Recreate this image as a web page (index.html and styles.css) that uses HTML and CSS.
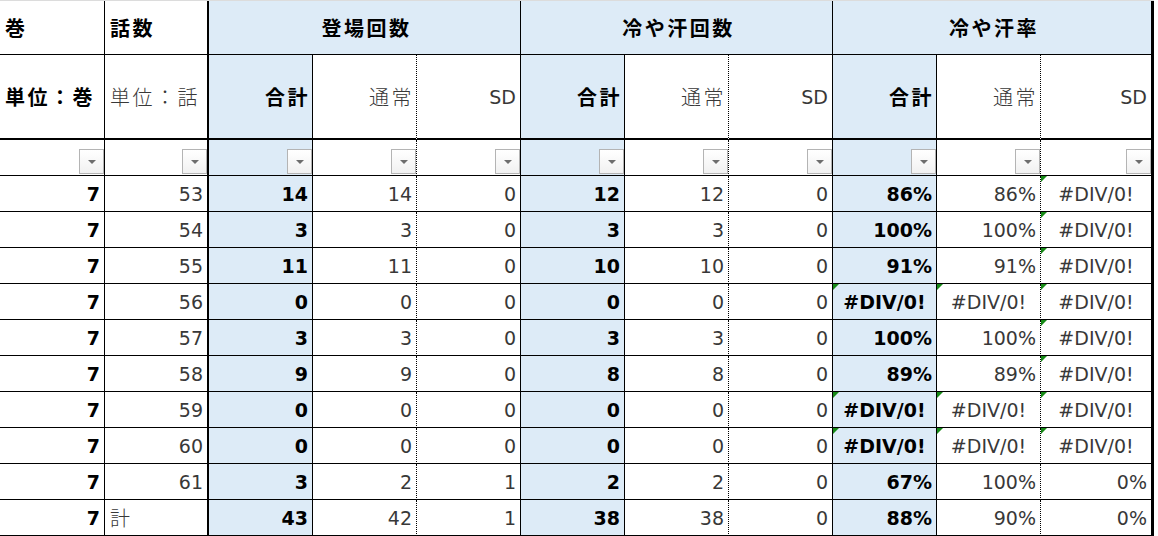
FILE: index.html
```html
<!DOCTYPE html>
<html lang="ja">
<head>
<meta charset="utf-8">
<title>冷や汗率</title>
<link rel="stylesheet" href="styles.css">
</head>
<body>
<div class="sheet">
  <div class="row top">
    <div class="j l bold">巻</div>
    <div class="j l bold">話数</div>
    <div class="j ctr bold blue span3">登場回数</div>
    <div class="j ctr bold blue span3">冷や汗回数</div>
    <div class="j ctr bold blue span3">冷や汗率</div>
  </div>
  <div class="row cols head">
    <div class="j l">単位：巻</div>
    <div class="j l">単位：話</div>
    <div class="j">合計</div><div class="j">通常</div><div>SD</div>
    <div class="j">合計</div><div class="j">通常</div><div>SD</div>
    <div class="j">合計</div><div class="j">通常</div><div>SD</div>
  </div>
  <div class="row cols filter">
    <div><span class="fb"></span></div>
    <div><span class="fb"></span></div>
    <div><span class="fb"></span></div>
    <div><span class="fb"></span></div>
    <div><span class="fb"></span></div>
    <div><span class="fb"></span></div>
    <div><span class="fb"></span></div>
    <div><span class="fb"></span></div>
    <div><span class="fb"></span></div>
    <div><span class="fb"></span></div>
    <div><span class="fb"></span></div>
  </div>
  <div class="row cols">
    <div>7</div><div>53</div>
    <div>14</div><div>14</div><div>0</div>
    <div>12</div><div>12</div><div>0</div>
    <div>86%</div><div>86%</div><div class="e">#DIV/0!</div>
  </div>
  <div class="row cols">
    <div>7</div><div>54</div>
    <div>3</div><div>3</div><div>0</div>
    <div>3</div><div>3</div><div>0</div>
    <div>100%</div><div>100%</div><div class="e">#DIV/0!</div>
  </div>
  <div class="row cols">
    <div>7</div><div>55</div>
    <div>11</div><div>11</div><div>0</div>
    <div>10</div><div>10</div><div>0</div>
    <div>91%</div><div>91%</div><div class="e">#DIV/0!</div>
  </div>
  <div class="row cols">
    <div>7</div><div>56</div>
    <div>0</div><div>0</div><div>0</div>
    <div>0</div><div>0</div><div>0</div>
    <div class="e">#DIV/0!</div><div class="e">#DIV/0!</div><div class="e">#DIV/0!</div>
  </div>
  <div class="row cols">
    <div>7</div><div>57</div>
    <div>3</div><div>3</div><div>0</div>
    <div>3</div><div>3</div><div>0</div>
    <div>100%</div><div>100%</div><div class="e">#DIV/0!</div>
  </div>
  <div class="row cols">
    <div>7</div><div>58</div>
    <div>9</div><div>9</div><div>0</div>
    <div>8</div><div>8</div><div>0</div>
    <div>89%</div><div>89%</div><div class="e">#DIV/0!</div>
  </div>
  <div class="row cols">
    <div>7</div><div>59</div>
    <div>0</div><div>0</div><div>0</div>
    <div>0</div><div>0</div><div>0</div>
    <div class="e">#DIV/0!</div><div class="e">#DIV/0!</div><div class="e">#DIV/0!</div>
  </div>
  <div class="row cols">
    <div>7</div><div>60</div>
    <div>0</div><div>0</div><div>0</div>
    <div>0</div><div>0</div><div>0</div>
    <div class="e">#DIV/0!</div><div class="e">#DIV/0!</div><div class="e">#DIV/0!</div>
  </div>
  <div class="row cols">
    <div>7</div><div>61</div>
    <div>3</div><div>2</div><div>1</div>
    <div>2</div><div>2</div><div>0</div>
    <div>67%</div><div>100%</div><div>0%</div>
  </div>
  <div class="row cols">
    <div>7</div><div class="j l">計</div>
    <div>43</div><div>42</div><div>1</div>
    <div>38</div><div>38</div><div>0</div>
    <div>88%</div><div>90%</div><div>0%</div>
  </div>
</div>
</body>
</html>
```
FILE: styles.css
```css
* { box-sizing: border-box; }

body {
  margin: 0;
  background: #fff;
  font-family: "DejaVu Sans", "Noto Sans CJK JP", sans-serif;
  color: #000;
}

.sheet {
  width: 1154px;
  border-top: 1px solid #dcdcdc;
}

.row {
  display: grid;
  grid-template-columns: 105px repeat(9, 104px) 113px;
  height: 36px;
}

.row > div {
  position: relative;
  display: flex;
  align-items: center;
  justify-content: flex-end;
  padding: 0 4px;
  border-right: 1px solid #000;
  border-bottom: 1px solid #000;
  font-size: 19px;
  font-weight: 400;
  color: #383838;
  white-space: nowrap;
}

.row > div:nth-child(2) { border-right-width: 2px; }
.row > div:last-child { border-right-width: 3px; }

.cols > div:first-child { font-weight: 700; color: #000; }
.cols > div:nth-child(3n) { background: #ddebf7; font-weight: 700; color: #000; }
.cols > div:nth-child(3n+4) { border-right-style: dotted; }

.top { height: 54px; }
.head { height: 85px; }
.head > div { border-bottom-width: 2px; }

.span3 { grid-column: span 3; }
.blue { background: #ddebf7; }
.bold { font-weight: 700 !important; color: #000 !important; }

.row > .j {
  font-family: "Noto Sans CJK JP", sans-serif;
  font-size: 20px;
  font-weight: 300;
  letter-spacing: 2.5px;
  padding-right: 2px;
}
.cols > .j:nth-child(3n),
.head > .j:first-child { font-weight: 700; color: #000; }

.row > .l { justify-content: flex-start; padding-left: 5px; }
.row > .ctr { justify-content: center; padding-left: 6px; }
.row > .e { justify-content: center; padding: 0; }

.row > .e::before {
  content: "";
  position: absolute;
  top: 0;
  left: 0;
  border-top: 6px solid #178a17;
  border-right: 6px solid transparent;
}

.filter > div {
  align-items: flex-end;
  padding: 0 0 1px 0;
}

.fb {
  display: flex;
  align-items: center;
  justify-content: center;
  width: 25px;
  height: 25px;
  border: 1px solid #b4b4b4;
  background: linear-gradient(#ffffff, #f1f1f1);
}

.fb::after {
  content: "";
  border-left: 4px solid transparent;
  border-right: 4px solid transparent;
  border-top: 4px solid #6d6d6d;
}
```
